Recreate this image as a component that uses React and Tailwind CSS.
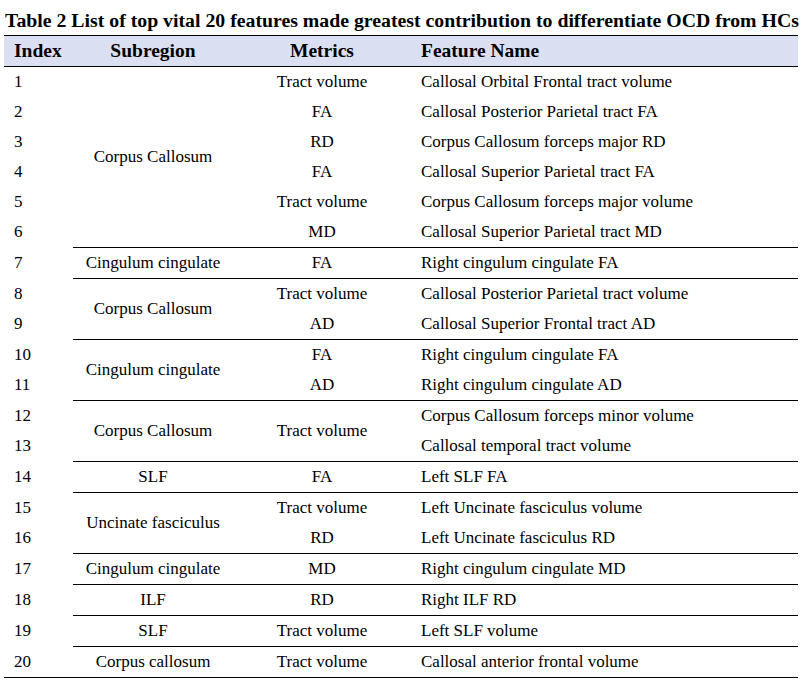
const groups = [
  {
    region: "Corpus Callosum",
    rows: [
      ["1", "Tract volume", "Callosal Orbital Frontal tract volume"],
      ["2", "FA", "Callosal Posterior Parietal tract FA"],
      ["3", "RD", "Corpus Callosum forceps major RD"],
      ["4", "FA", "Callosal Superior Parietal tract FA"],
      ["5", "Tract volume", "Corpus Callosum forceps major volume"],
      ["6", "MD", "Callosal Superior Parietal tract MD"],
    ],
  },
  { region: "Cingulum cingulate", rows: [["7", "FA", "Right cingulum cingulate FA"]] },
  {
    region: "Corpus Callosum",
    rows: [
      ["8", "Tract volume", "Callosal Posterior Parietal tract volume"],
      ["9", "AD", "Callosal Superior Frontal tract AD"],
    ],
  },
  {
    region: "Cingulum cingulate",
    rows: [
      ["10", "FA", "Right cingulum cingulate FA"],
      ["11", "AD", "Right cingulum cingulate AD"],
    ],
  },
  {
    region: "Corpus Callosum",
    metric: "Tract volume",
    rows: [
      ["12", null, "Corpus Callosum forceps minor volume"],
      ["13", null, "Callosal temporal tract volume"],
    ],
  },
  { region: "SLF", rows: [["14", "FA", "Left SLF FA"]] },
  {
    region: "Uncinate fasciculus",
    rows: [
      ["15", "Tract volume", "Left Uncinate fasciculus volume"],
      ["16", "RD", "Left Uncinate fasciculus RD"],
    ],
  },
  { region: "Cingulum cingulate", rows: [["17", "MD", "Right cingulum cingulate MD"]] },
  { region: "ILF", rows: [["18", "RD", "Right ILF RD"]] },
  { region: "SLF", rows: [["19", "Tract volume", "Left SLF volume"]] },
  { region: "Corpus callosum", rows: [["20", "Tract volume", "Callosal anterior frontal volume"]] },
];

function App() {
  return (
    <div className="w-[808px] h-[690px] bg-white text-black font-['Liberation_Serif','Times_New_Roman',serif]">
      <div className="pt-[8px] pl-[5px] h-[35px] text-[19.8px] leading-[24px] font-bold whitespace-nowrap">
        Table 2 List of top vital 20 features made greatest contribution to differentiate OCD from HCs
      </div>
      <table className="ml-[4px] w-[794px] border-separate border-spacing-0 text-[17px] table-fixed">
        <colgroup>
          <col className="w-[69px]" />
          <col className="w-[160px]" />
          <col className="w-[178px]" />
          <col />
        </colgroup>
        <thead>
          <tr className="bg-[#dae0f2] text-[19.5px] font-bold">
            <th className="box-content h-[30px] border-y border-black pl-[10px] text-left font-bold">Index</th>
            <th className="box-content h-[30px] border-y border-black text-center font-bold">Subregion</th>
            <th className="box-content h-[30px] border-y border-black text-center font-bold">Metrics</th>
            <th className="box-content h-[30px] border-y border-black pl-[10px] text-left font-bold">Feature Name</th>
          </tr>
        </thead>
        <tbody>
          {groups.map((g, gi) => {
            const top = gi > 0 ? "border-t border-black" : "";
            const last = gi === groups.length - 1;
            const bottom = last ? "border-b border-black" : "";
            return g.rows.map((r, ri) => (
              <tr key={r[0]}>
                <td className={`box-content h-[30px] pl-[10px] align-middle ${ri === 0 && gi > 0 ? "pt-px" : ""} ${bottom}`}>{r[0]}</td>
                {ri === 0 && (
                  <td rowSpan={g.rows.length} className={`box-content text-center align-middle ${top} ${bottom}`}>
                    {g.region}
                  </td>
                )}
                {g.metric ? (
                  ri === 0 && (
                    <td rowSpan={g.rows.length} className={`box-content text-center align-middle ${top} ${bottom}`}>
                      {g.metric}
                    </td>
                  )
                ) : (
                  <td className={`box-content h-[30px] text-center align-middle ${ri === 0 ? top : ""} ${bottom}`}>{r[1]}</td>
                )}
                <td className={`box-content h-[30px] pl-[10px] align-middle ${ri === 0 ? top : ""} ${bottom}`}>{r[2]}</td>
              </tr>
            ));
          })}
        </tbody>
      </table>
    </div>
  );
}

export default App;
